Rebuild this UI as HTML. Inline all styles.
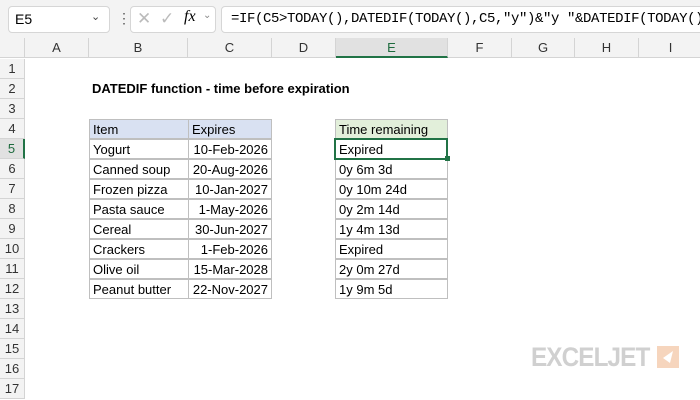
<!DOCTYPE html>
<html><head><style>
body{margin:0;width:700px;height:400px;overflow:hidden;background:#fff;font-family:"Liberation Sans",Calibri,sans-serif;position:relative}
.a{position:absolute}
.top{left:0;top:0;width:700px;height:38px;background:#f3f3f3}
.box{background:#fff;border:1px solid #d6d6d6;border-radius:4px}
.ch{top:38px;height:20px;background:#f3f3f3;border-bottom:1px solid #d4d4d4;border-right:1px solid #d4d4d4;box-sizing:border-box;text-align:center;font-size:13px;line-height:20px;color:#333}
.rh{left:0;width:25px;height:20px;background:#f3f3f3;border-bottom:1px solid #d4d4d4;border-right:1px solid #d4d4d4;box-sizing:border-box;text-align:center;font-size:13px;line-height:20px;color:#333}
.c{height:20px;box-sizing:border-box;font-size:13px;line-height:19px;padding:0 3px;white-space:nowrap;color:#000}
.g{border:1px solid #bfbfbf}
</style></head><body>
<div class="a top"></div>
<div class="a box" style="left:8px;top:6px;width:100px;height:25px"></div>
<div class="a" style="left:15px;top:11px;font-size:14px">E5</div>
<div class="a" style="left:91px;top:10px;font-size:11px;color:#444">&#8964;</div>
<div class="a" style="left:117px;top:10px;font-size:14px;color:#555">&#8942;</div>
<div class="a box" style="left:130px;top:6px;width:84px;height:25px"></div>
<div class="a" style="left:137px;top:9px;font-size:17px;color:#bbb">&#10005;</div>
<div class="a" style="left:160px;top:9px;font-size:17px;color:#bbb">&#10003;</div>
<div class="a" style="left:184px;top:8px;font-size:16px;font-style:italic;font-family:'Liberation Serif',serif">fx</div>
<div class="a" style="left:203px;top:10px;font-size:10px;color:#888">&#8964;</div>
<div class="a box" style="left:221px;top:6px;width:490px;height:25px;border-radius:4px 0 0 4px"></div>
<div class="a" style="left:231px;top:11px;font-size:14px;font-family:'Liberation Mono',monospace;letter-spacing:-0.4px;white-space:nowrap">=IF(C5&gt;TODAY(),DATEDIF(TODAY(),C5,"y")&amp;"y "&amp;DATEDIF(TODAY(),</div>

<div class="a ch" style="left:0;width:25px"></div>
<div class="a ch" style="left:25px;width:64px">A</div>
<div class="a ch" style="left:89px;width:99px">B</div>
<div class="a ch" style="left:188px;width:84px">C</div>
<div class="a ch" style="left:272px;width:64px">D</div>
<div class="a ch" style="left:336px;width:112px;background:#e1e1e1;border-bottom:2px solid #217346;color:#1e6b3e">E</div>
<div class="a ch" style="left:448px;width:64px">F</div>
<div class="a ch" style="left:512px;width:63px">G</div>
<div class="a ch" style="left:575px;width:64px">H</div>
<div class="a ch" style="left:639px;width:64px">I</div>

<div class="a rh" style="top:59px">1</div><div class="a rh" style="top:79px">2</div><div class="a rh" style="top:99px">3</div><div class="a rh" style="top:119px">4</div>
<div class="a rh" style="top:139px;background:#e1e1e1;border-right:2px solid #217346;color:#1e6b3e">5</div>
<div class="a rh" style="top:159px">6</div><div class="a rh" style="top:179px">7</div><div class="a rh" style="top:199px">8</div><div class="a rh" style="top:219px">9</div><div class="a rh" style="top:239px">10</div><div class="a rh" style="top:259px">11</div><div class="a rh" style="top:279px">12</div><div class="a rh" style="top:299px">13</div><div class="a rh" style="top:319px">14</div><div class="a rh" style="top:339px">15</div><div class="a rh" style="top:359px">16</div><div class="a rh" style="top:379px">17</div>

<div class="a c" style="left:89px;top:79px;font-weight:bold">DATEDIF function - time before expiration</div>

<div class="a c g" style="left:89px;top:119px;width:100px;background:#d9e1f2">Item</div>
<div class="a c g" style="left:188px;top:119px;width:84px;background:#d9e1f2">Expires</div>
<div class="a c g" style="left:89px;top:139px;width:100px">Yogurt</div><div class="a c g" style="left:188px;top:139px;width:84px;text-align:right">10-Feb-2026</div>
<div class="a c g" style="left:89px;top:159px;width:100px">Canned soup</div><div class="a c g" style="left:188px;top:159px;width:84px;text-align:right">20-Aug-2026</div>
<div class="a c g" style="left:89px;top:179px;width:100px">Frozen pizza</div><div class="a c g" style="left:188px;top:179px;width:84px;text-align:right">10-Jan-2027</div>
<div class="a c g" style="left:89px;top:199px;width:100px">Pasta sauce</div><div class="a c g" style="left:188px;top:199px;width:84px;text-align:right">1-May-2026</div>
<div class="a c g" style="left:89px;top:219px;width:100px">Cereal</div><div class="a c g" style="left:188px;top:219px;width:84px;text-align:right">30-Jun-2027</div>
<div class="a c g" style="left:89px;top:239px;width:100px">Crackers</div><div class="a c g" style="left:188px;top:239px;width:84px;text-align:right">1-Feb-2026</div>
<div class="a c g" style="left:89px;top:259px;width:100px">Olive oil</div><div class="a c g" style="left:188px;top:259px;width:84px;text-align:right">15-Mar-2028</div>
<div class="a c g" style="left:89px;top:279px;width:100px">Peanut butter</div><div class="a c g" style="left:188px;top:279px;width:84px;text-align:right">22-Nov-2027</div>

<div class="a c g" style="left:335px;top:119px;width:113px;background:#e2efda">Time remaining</div>
<div class="a c g" style="left:335px;top:139px;width:113px">Expired</div>
<div class="a c g" style="left:335px;top:159px;width:113px">0y 6m 3d</div>
<div class="a c g" style="left:335px;top:179px;width:113px">0y 10m 24d</div>
<div class="a c g" style="left:335px;top:199px;width:113px">0y 2m 14d</div>
<div class="a c g" style="left:335px;top:219px;width:113px">1y 4m 13d</div>
<div class="a c g" style="left:335px;top:239px;width:113px">Expired</div>
<div class="a c g" style="left:335px;top:259px;width:113px">2y 0m 27d</div>
<div class="a c g" style="left:335px;top:279px;width:113px">1y 9m 5d</div>
<div class="a" style="left:334px;top:138px;width:114px;height:22px;border:2px solid #217346;box-sizing:border-box"></div>
<div class="a" style="left:445px;top:156px;width:5px;height:5px;background:#217346"></div>

<div class="a" style="left:531px;top:342px;font-size:27px;font-weight:bold;color:#d0d0d0;letter-spacing:-1px;transform:scaleX(0.9);transform-origin:left">EXCELJET</div>
<div class="a" style="left:657px;top:346px;width:22px;height:22px;background:#f6d5bd"></div>
<svg class="a" style="left:657px;top:346px" width="22" height="22"><path d="M16 5 L6 12 L13 17 Z" fill="#fff"/></svg>
</body></html>
